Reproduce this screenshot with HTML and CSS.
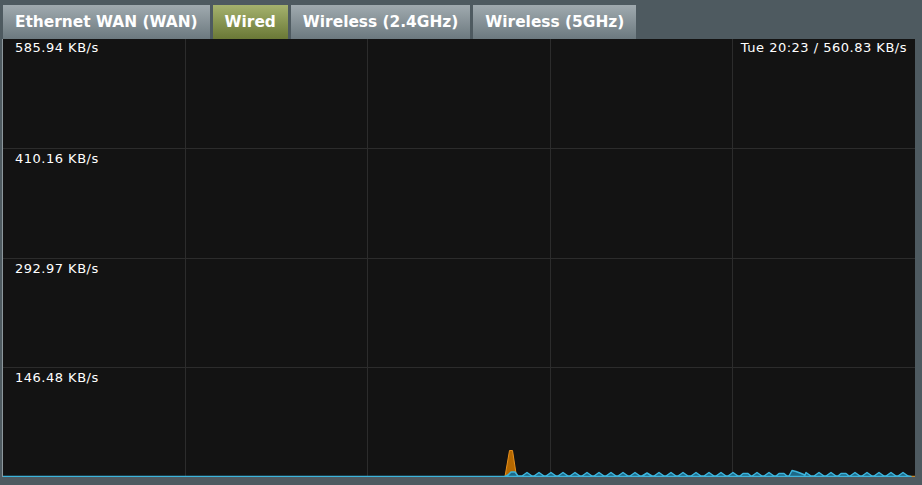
FILE: index.html
```html
<!DOCTYPE html>
<html>
<head>
  <meta charset="UTF-8">
  <title>Traffic Monitor</title>
  <link rel="stylesheet" href="styles.css">
</head>
<body>
  <div class="monitor">
    <div class="tab-buttons">
      <button class="tab-button">Ethernet WAN (WAN)</button>
      <button class="tab-button active">Wired</button>
      <button class="tab-button">Wireless (2.4GHz)</button>
      <button class="tab-button">Wireless (5GHz)</button>
    </div>

    <div class="graph">
      <div class="graph-row">
        <div class="cell"><span class="scale">585.94 KB/s</span></div>
        <div class="cell"></div>
        <div class="cell"></div>
        <div class="cell"></div>
        <div class="cell cell-last"><span class="now">Tue 20:23 / 560.83 KB/s</span></div>
      </div>
      <div class="graph-row">
        <div class="cell"><span class="scale">410.16 KB/s</span></div>
        <div class="cell"></div>
        <div class="cell"></div>
        <div class="cell"></div>
        <div class="cell cell-last"></div>
      </div>
      <div class="graph-row">
        <div class="cell"><span class="scale">292.97 KB/s</span></div>
        <div class="cell"></div>
        <div class="cell"></div>
        <div class="cell"></div>
        <div class="cell cell-last"></div>
      </div>
      <div class="graph-row row-last">
        <div class="cell"><span class="scale">146.48 KB/s</span></div>
        <div class="cell"></div>
        <div class="cell"></div>
        <div class="cell"></div>
        <div class="cell cell-last"></div>
      </div>

      <!-- rx / tx history, drawn on top of the grid -->
      <svg class="traffic" width="912" height="31" viewBox="0 0 912 31">
        <polyline class="tx-base" points="0,30.5 503,30.5"></polyline>
        <polyline class="rx-base" points="503,30.5 912,30.5"></polyline>
        <polygon class="rx" points="502,30.5 506.5,4.5 509.5,4.5 513.5,30.5"></polygon>
        <polygon class="tx" points="502,30.5 505,29 508,26 512,26 515,30
          519,30 524,26.5 529,30 531,30 536,26.5 541,30 543,30 548,26.5 553,30
          555,30 560,26.5 565,30 567,30 572,26.5 577,30 579,30 584,26.5 589,30
          591,30 596,26.5 601,30 603,30 608,26.5 613,30 615,30 620,26.5 625,30
          627,30 632,26.5 637,30 639,30 644,27 649,30 651,30 656,26.5 661,30
          663,30 668,26.5 673,30 675,30 680,26.5 685,30 688,30 693,26.5 698,30
          701,30 706,26.5 711,30 713,30 718,26.5 723,30 725,30 730,26.5 735,30
          737,30 740,27.5 745,27.5 748,30 749,30 754,26.5 759,30 761,30 766,26.5 771,30
          773,30 776,27.5 781,27.5 784,30 786,30 789,24.5 793,25.5 797,27 802,29
          803,26.5 808,30 811,30 816,26.5 821,30 823,30 828,26.5 833,30
          835,30 838,27.5 843,27.5 846,30 847,30 852,26.5 857,30 859,30 864,26.5 869,30
          871,30 876,26.5 881,30 883,30 888,26.5 893,30 895,30 900,26.5 905,30
          908,30.5"></polygon>
      </svg>
    </div>
  </div>
</body>
</html>
```

FILE: styles.css
```css
body {
  margin: 0;
  width: 922px;
  height: 485px;
  background: #4e5a60;
  overflow: hidden;
}
.monitor {
  padding: 5px 0 0 3px;
}
.tab-buttons {
  display: flex;
  gap: 3px;
}
.tab-button {
  height: 34px;
  padding: 0 12px;
  border: none;
  border-radius: 0;
  margin: 0;
  background: linear-gradient(#a0aaaf, #6c797f);
  color: #fff;
  font-family: "DejaVu Sans", Verdana, sans-serif;
  font-weight: bold;
  font-size: 15.4px;
  cursor: pointer;
}
.tab-button.active {
  background: linear-gradient(#a5b26e, #6a7836);
}
.graph {
  position: relative;
  width: 912px;
  height: 438px;
  background: #131313;
  box-shadow: -1px 0 0 #8d989d;
  display: flex;
  flex-direction: column;
  font-family: "DejaVu Sans", Verdana, sans-serif;
  font-size: 13px;
  letter-spacing: 0.5px;
  color: #fff;
}
.graph-row {
  flex: 1;
  display: flex;
  border-bottom: 1px solid #2c2c2c;
}
.graph-row.row-last {
  border-bottom: none;
}
.cell {
  flex: 1 1 0;
  border-right: 1px solid #2c2c2c;
  padding-top: 1px;
}
.cell-last {
  border-right: none;
  text-align: right;
}
.graph-row + .graph-row .cell {
  padding-top: 2px;
}
.scale {
  margin-left: 12px;
}
.now {
  margin-right: 8px;
}
.traffic {
  position: absolute;
  left: 0;
  bottom: 0;
}
.traffic polyline {
  fill: none;
  stroke-width: 1.5;
}
.tx-base {
  stroke: #3cb4dc;
}
.rx-base {
  stroke: #c98a2a;
}
.rx {
  fill: #b56800;
  stroke: #e8901c;
  stroke-width: 1;
}
.tx {
  fill: #1d6886;
  stroke: #3cb4dc;
  stroke-width: 1.5;
  stroke-linejoin: round;
}
```
